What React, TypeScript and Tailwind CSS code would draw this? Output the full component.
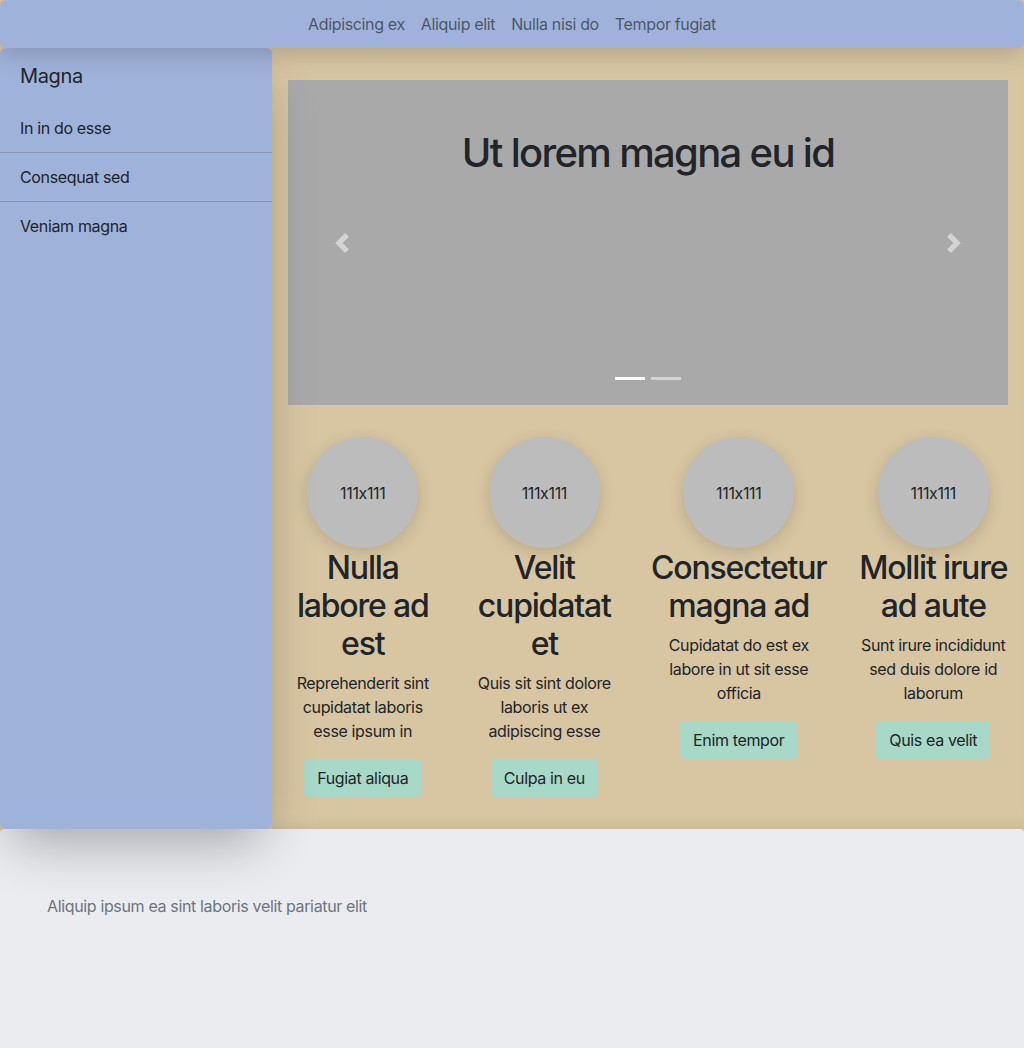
import React from "react";

const cards = [
  { title: "Nulla labore ad est", text: "Reprehenderit sint cupidatat laboris esse ipsum in", btn: "Fugiat aliqua" },
  { title: "Velit cupidatat et", text: "Quis sit sint dolore laboris ut ex adipiscing esse", btn: "Culpa in eu" },
  { title: "Consectetur magna ad", text: "Cupidatat do est ex labore in ut sit esse officia", btn: "Enim tempor" },
  { title: "Mollit irure ad aute", text: "Sunt irure incididunt sed duis dolore id laborum", btn: "Quis ea velit" },
];

function Chevron({ dir }: { dir: "prev" | "next" }) {
  return (
    <svg viewBox="0 0 8 8" className="w-5 h-5" fill="#fff">
      {dir === "prev" ? (
        <path d="M5.25 0l-4 4 4 4 1.5-1.5L4.25 4l2.5-2.5L5.25 0z" />
      ) : (
        <path d="M2.75 0l-1.5 1.5L3.75 4l-2.5 2.5L2.75 8l4-4-4-4z" />
      )}
    </svg>
  );
}

export default function App() {
  return (
    <div className="min-h-screen flex flex-col bg-[#d8c6a2] font-['Inter',sans-serif] [font-feature-settings:'calt'_0] tracking-[-0.022em] text-[#212529] text-base leading-6">
      <header className="relative z-30 h-12 rounded-md bg-[#9fb2d9] shadow-[0_6px_24px_rgba(0,0,0,0.18)] flex items-center justify-center">
        <nav className="flex">
          {["Adipiscing ex", "Aliquip elit", "Nulla nisi do", "Tempor fugiat"].map((l) => (
            <a key={l} className="px-2 text-black/55">
              {l}
            </a>
          ))}
        </nav>
      </header>

      <div className="flex">
        <aside className="relative z-20 w-[272px] shrink-0 bg-[#9fb2da] rounded-md shadow-[0_25px_50px_-12px_rgba(0,0,0,0.3)]">
          <div className="px-5 py-4 text-xl leading-6">Magna</div>
          <ul>
            <li className="px-5 py-3 border-b border-[#8696ba]">In in do esse</li>
            <li className="px-5 py-3 border-b border-[#8696ba]">Consequat sed</li>
            <li className="px-5 py-3">Veniam magna</li>
          </ul>
        </aside>

        <main className="relative z-0 flex-1 min-w-0 px-4 pt-8 pb-8 shadow-[inset_0_-12px_16px_-12px_rgba(0,0,0,0.1)]">
          <div className="relative h-[325px] bg-[#a9a9a9]">
            <h1 className="pt-[49px] text-center text-[40px] leading-[48px] font-medium tracking-[-0.042em]">
              Ut lorem magna eu id
            </h1>
            <div className="absolute inset-y-0 left-0 w-[15%] flex items-center justify-center opacity-50">
              <Chevron dir="prev" />
            </div>
            <div className="absolute inset-y-0 right-0 w-[15%] flex items-center justify-center opacity-50">
              <Chevron dir="next" />
            </div>
            <div className="absolute bottom-[25px] inset-x-0 flex justify-center gap-1.5">
              <span className="w-[30px] h-[3px] bg-white" />
              <span className="w-[30px] h-[3px] bg-white/50" />
            </div>
          </div>

          <div className="mt-8 flex gap-8">
            {cards.map((c) => (
              <div key={c.btn} className="flex-1 flex flex-col items-center text-center">
                <div className="w-[111px] h-[111px] rounded-full bg-[#bcbcbc] shadow-[0_4px_16px_rgba(0,0,0,0.15)] flex items-center justify-center">
                  111x111
                </div>
                <h2 className="mt-px mb-2 text-[32px] leading-[38px] font-medium tracking-[-0.037em]">{c.title}</h2>
                <p className="mb-4">{c.text}</p>
                <button className="px-3 py-1.5 rounded border border-transparent bg-[#a8d8c7]">{c.btn}</button>
              </div>
            ))}
          </div>
        </main>
      </div>

      <footer className="relative z-10 flex-1 bg-[#ebecf0] rounded-t-sm px-[47px] pt-[65px] pb-12 text-[#6c757d]">
        Aliquip ipsum ea sint laboris velit pariatur elit
      </footer>
    </div>
  );
}
